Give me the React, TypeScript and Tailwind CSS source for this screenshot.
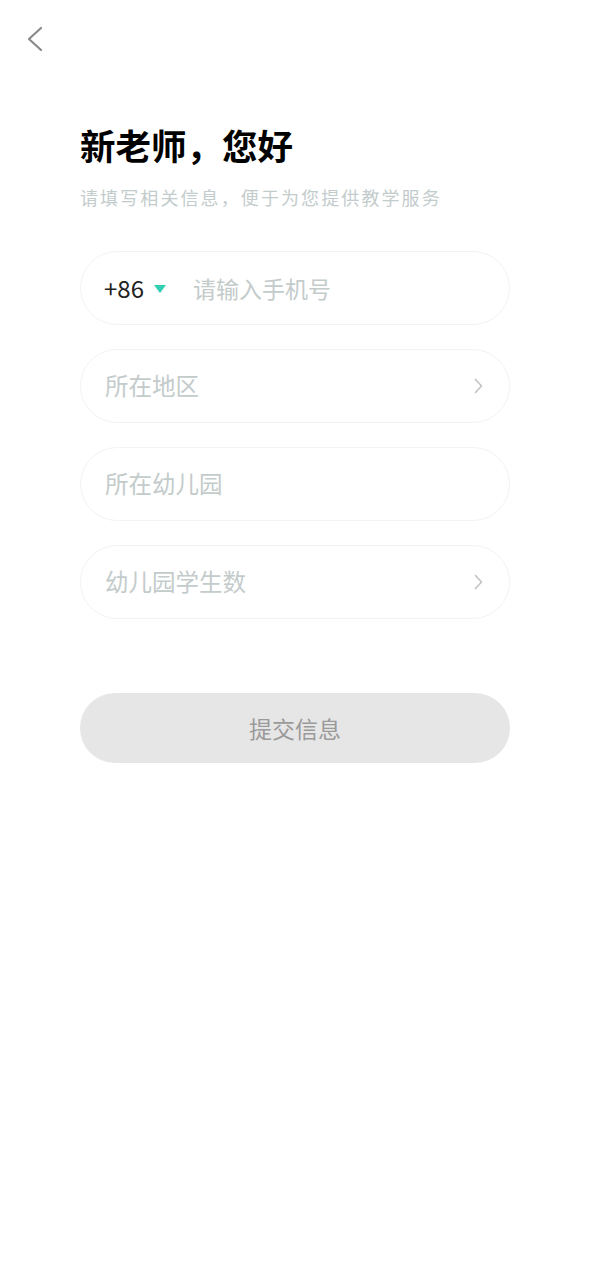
import React from 'react';

const fields = [
  { label: '所在地区', arrow: true },
  { label: '所在幼儿园', arrow: false },
  { label: '幼儿园学生数', arrow: true },
];

function Chevron() {
  return (
    <svg width="12" height="18" viewBox="0 0 12 18" fill="none" className="shrink-0">
      <path d="M3.5 2.5l6 6.5-6 6.5" stroke="#c4c4c4" strokeWidth="1.7" strokeLinecap="round" strokeLinejoin="round" />
    </svg>
  );
}

export default function App() {
  return (
    <div
      className="w-[590px] min-h-[1280px] bg-white relative"
      style={{ fontFamily: '"Noto Sans CJK SC", "Noto Sans", sans-serif' }}
    >
      {/* Back */}
      <div className="pt-[26px] pl-[25px] h-[120px]">
        <svg width="20" height="26" viewBox="0 0 20 26" fill="none">
          <path d="M16 2L4 13l12 11" stroke="#8a8a8a" strokeWidth="2.2" strokeLinecap="round" strokeLinejoin="round" />
        </svg>
      </div>

      <div className="px-[80px]">
        <h1 className="text-[35.5px] font-bold text-black leading-[50px]">新老师，您好</h1>
        <p className="text-[18px] tracking-[2.1px] text-[#c3cccc] mt-[15px] leading-[24px]">请填写相关信息，便于为您提供教学服务</p>

        <div className="mt-[42px] flex flex-col gap-[24px]">
          <div className="h-[74px] rounded-full border border-[#f2f3f3] flex items-center px-[23px]">
            <span className="text-[24px] text-[#222] leading-none">+86</span>
            <svg width="14" height="10" viewBox="0 0 14 10" className="ml-[9px] mt-[1px]">
              <path d="M1 1h12L7 9z" fill="#2fcfb0" />
            </svg>
            <span className="text-[23px] text-[#c3cbcb] ml-[26px]">请输入手机号</span>
          </div>
          {fields.map((f, i) => (
            <div key={i} className="h-[74px] rounded-full border border-[#f2f3f3] flex items-center justify-between pl-[24px] pr-[25px]">
              <span className="text-[23.5px] text-[#c3cbcb]">{f.label}</span>
              {f.arrow && <Chevron />}
            </div>
          ))}
        </div>

        <button className="mt-[74px] w-full h-[70px] rounded-full bg-[#e6e6e6] text-[23px] text-[#9a9a9a]">
          提交信息
        </button>
      </div>
    </div>
  );
}
